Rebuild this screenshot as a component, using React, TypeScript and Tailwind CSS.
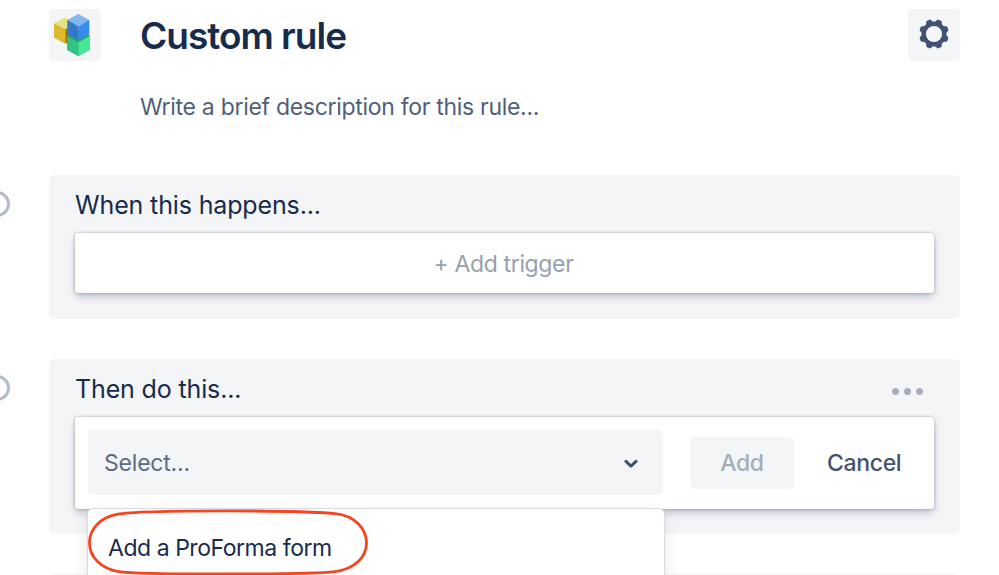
import { useState, type ReactNode } from 'react';

const gearTeeth = [22.5, 67.5, 112.5, 157.5, 202.5, 247.5, 292.5, 337.5];

const actions = ['Add a ProForma form'];

function CubesIcon() {
  return (
    <svg viewBox="27 25 156 156" className="w-[52px] h-[52px]" aria-hidden="true">
      {/* Yellow cube */}
      <path d="M75 51L42 68L76 86L110 68Z" fill="#e3e37d" />
      <path d="M42 68L76 86V129L42 111Z" fill="#dcb92e" />
      <path d="M76 86L90 78V121L76 129Z" fill="#8f7611" />
      {/* Green cube */}
      <path d="M82 106L115 90L149 104V148L115 166L82 148Z" fill="#20a568" />
      <path d="M82 106L115 125V166L82 148Z" fill="#34c387" />
      <path d="M115 125L149 106V148L115 166Z" fill="#48e697" />
      {/* Blue cube */}
      <path d="M115 40L148 58L115 77L82 58Z" fill="#83b5ee" />
      <path d="M82 58L115 77V119L82 101Z" fill="#3478cb" />
      <path d="M115 77L148 58V101L115 119Z" fill="#398bea" />
    </svg>
  );
}

function GearIcon() {
  return (
    <svg viewBox="-15 -15 30 30" className="mb-[2px] mr-px w-[30px] h-[30px]" aria-hidden="true">
      <circle r="10.3" fill="none" stroke="#425273" strokeWidth="4.4" />
      {gearTeeth.map((angle) => (
        <path
          key={angle}
          d="M-4 -10.5L-2.700 -13.800Q-2.300 -14.900 -1.300 -14.900H1.300Q2.300 -14.900 2.700 -13.800L4 -10.500Z"
          fill="#425273"
          transform={`rotate(${angle})`}
        />
      ))}
    </svg>
  );
}

function Step({ title, menu, className, children }: {
  title: string;
  menu?: boolean;
  className: string;
  children: ReactNode;
}) {
  return (
    <section className="flex">
      <div className="w-[49px] shrink-0">
        <div className="-ml-4 mt-4 w-[26px] h-[26px] rounded-full border-[3px] border-[#b3bac8]" />
      </div>
      <div className={`w-[911px] rounded-md bg-[#f4f5f7] px-[26px] ${className}`}>
        <div className="flex h-full flex-col">
          <div className="flex h-[58px] shrink-0 items-center justify-between">
            <h2 className="mt-0.5 whitespace-nowrap text-[25px] leading-[30px] tracking-[-0.14px] text-[#172b4d]">
              {title}
            </h2>
            {menu && (
              <button className="mr-[11px] mt-1.5 flex gap-[5px] cursor-pointer" aria-label="More">
                <span className="w-[7px] h-[7px] rounded-full bg-[#a5adba]" />
                <span className="w-[7px] h-[7px] rounded-full bg-[#a5adba]" />
                <span className="w-[7px] h-[7px] rounded-full bg-[#a5adba]" />
              </button>
            )}
          </div>
          {children}
        </div>
      </div>
    </section>
  );
}

export default function App() {
  const [isOpen, setIsOpen] = useState(true);

  return (
    <div className="h-[575px] w-[999px] overflow-hidden bg-white font-['Inter','Liberation_Sans',sans-serif] text-[#172b4d]">
      {/* Rule header */}
      <header className="flex h-[175px] pl-[49px] pt-[8.5px] pr-[39px]">
        <div className="w-[52px] h-[52px] shrink-0 rounded bg-[#f4f5f7]">
          <CubesIcon />
        </div>
        <div className="ml-[39px] flex-1">
          <h1 className="whitespace-nowrap text-[37px] font-semibold leading-[54px] tracking-[-1px]">
            Custom rule
          </h1>
          <p className="mt-[30px] whitespace-nowrap text-[23px] leading-7 tracking-[-0.3px] text-[#505f79]">
            Write a brief description for this rule...
          </p>
        </div>
        <button
          className="flex w-[52px] h-[52px] shrink-0 items-center justify-center rounded-[5px] bg-[#f4f5f7] cursor-pointer"
          aria-label="Settings"
        >
          <GearIcon />
        </button>
      </header>

      <main className="flex flex-col gap-10">
        <Step title="When this happens..." className="h-[144px]">
          <button className="flex h-[60px] w-[859px] items-center justify-center whitespace-nowrap rounded-[3px] bg-white pr-0.5 pt-0.5 text-[23px] tracking-[-0.36px] text-[#97a0af] shadow-[0_4px_8px_-1px_rgba(9,30,66,0.28),0_0_3px_rgba(9,30,66,0.31)] cursor-pointer">
            + Add trigger
          </button>
        </Step>

        <Step title="Then do this..." menu className="h-[175px]">
          <div className="relative flex h-[92px] w-[859px] items-start rounded-[3px] bg-white pl-[13px] pt-[13px] shadow-[0_4px_8px_-1px_rgba(9,30,66,0.28),0_0_3px_rgba(9,30,66,0.31)]">
            <button
              onClick={() => setIsOpen(!isOpen)}
              className="flex h-[65px] w-[575px] items-center justify-between rounded-[5px] bg-[#f4f5f7] pl-4 pr-[25px] pt-0.5 cursor-pointer"
            >
              <span className="text-[23px] tracking-[-0.2px] text-[#5e6c84]">Select...</span>
              <svg viewBox="0 0 14 10" className="w-[14px] h-[10px]" fill="none" aria-hidden="true">
                <path d="M2 2.4L7 7.2L12 2.4" stroke="#42526e" strokeWidth="3" strokeLinecap="round" strokeLinejoin="round" />
              </svg>
            </button>
            <button disabled className="ml-[27px] mt-[7px] h-[52px] w-[104px] rounded-[5px] bg-[#f4f5f7] text-[23px] font-medium tracking-[-0.4px] text-[#a5adba]">
              Add
            </button>
            <button className="ml-[33px] mt-[7px] h-[52px] text-[23px] font-medium tracking-[-0.35px] text-[#42526e] cursor-pointer">
              Cancel
            </button>

            {isOpen && (
              <div className="absolute left-3 top-[91px] z-10 h-40 w-[578px] rounded-[6px] border border-[#d8dadd] bg-white pl-5 pt-6 shadow-[0_6px_16px_rgba(0,0,0,0.1)]">
                {actions.map((action) => (
                  <div key={action} className="whitespace-nowrap text-[23px] leading-[30px] tracking-[-0.46px]">
                    {action}
                  </div>
                ))}
                {/* Hand-drawn ring round the first option */}
                <svg
                  viewBox="0 0 282 68"
                  className="pointer-events-none absolute left-[-1px] top-0 w-[282px] h-[68px]"
                  fill="none"
                  aria-hidden="true"
                >
                  <path
                    d="M2.500 34C2.500 20 13 8.500 30 5.400C42 3 90 1.900 140 1.900C190 1.900 230 3.200 248 4.600C268 6.500 279.500 20 279.500 34C279.500 48 268 60 248 62.600C232 64.500 190 65 140 65C90 65 42 64.500 32 62.600C14 60 2.500 48 2.500 34Z"
                    stroke="#f64420"
                    strokeWidth="2.800"
                  />
                </svg>
              </div>
            )}
          </div>
        </Step>

        <Step title="" className="h-[60px]">
          {null}
        </Step>
      </main>
    </div>
  );
}
